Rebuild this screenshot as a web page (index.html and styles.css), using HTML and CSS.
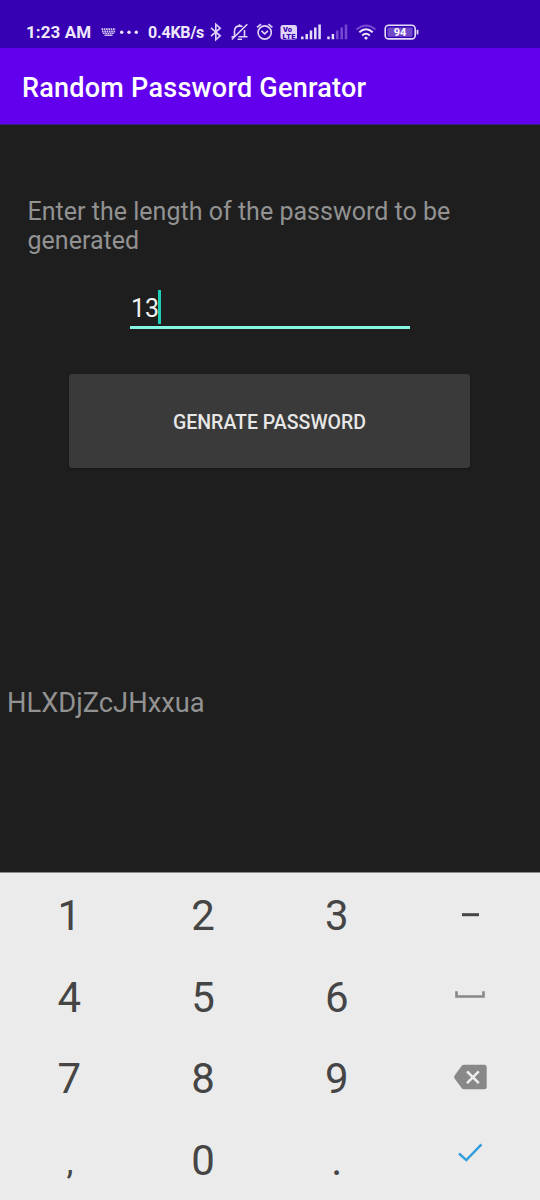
FILE: index.html
```html
<!DOCTYPE html>
<html lang="en">
<head>
<meta charset="utf-8">
<title>Random Password Genrator</title>
<link rel="stylesheet" href="styles.css">
</head>
<body>
<div class="screen">
  <header class="status">
    <span class="clock">1:23 AM</span>
    <svg class="notices" width="40" height="20" viewBox="100 22 40 20">
      <g fill="none" stroke="#d9cdf5" stroke-width="1.900" stroke-dasharray="1.600 .7">
        <path d="M101.500 29.100h14M102 31.500h13.500"/>
        <path d="M103 33.400h11.500" stroke-width="1.200"/>
      </g>
      <path d="M104.500 35.200h8" stroke="#d9cdf5" stroke-width="1.400"/>
      <g fill="#efe8fc"><circle cx="121.700" cy="32.200" r="1.700"/><circle cx="129" cy="32.200" r="1.700"/><circle cx="136.300" cy="32.200" r="1.700"/></g>
    </svg>
    <span class="speed">0.4KB/s</span>
    <svg class="icons" width="212" height="24" viewBox="208 20 212 24" fill="none" stroke="#e0d5f8" stroke-width="1.600">
      <path d="M211 27.800l9.200 8-4.400 4V24.200l4.400 4-9.200 8"/>
      <path d="M231.500 36.800h3v-5.500c0-3.400 2-5.200 5-5.400 1.300 0 2.300.3 3 .8M244.500 30v6.800h3M239.500 26v-1.800M237.500 39.300h4.500M231.800 39.500L247.300 24.300M238.500 36.800h7"/>
      <g>
        <circle cx="264.700" cy="32.500" r="6.600"/>
        <path d="M257 27.400l4-3.300M272.400 27.400l-4-3.300M261.500 30.800l3.200 3 3.200-3"/>
      </g>
      <rect x="280.500" y="25" width="16.500" height="14.600" rx="2.500" fill="#e0d5f8" stroke="none"/>
      <text class="volte" x="283" y="31.600">Vo</text>
      <text class="volte" x="282.500" y="38.500" textLength="13">LTE</text>
      <g stroke="#e6ddfa" stroke-width="2.500">
        <path d="M302.300 39.300V36.500M306.700 39.300V34M311 39.300V30.500M315.300 39.300V27.500M319.600 39.300V24.500"/>
        <path d="M328.500 39.300V36.500M332.900 39.300V34"/>
        <path d="M337.300 39.300V30.500M341.700 39.300V27.500M346 39.300V24.500" stroke="#7548d0"/>
      </g>
      <g stroke-width="2">
        <path d="M356.500 29.500Q366 21.500 375.500 29.500" stroke="#7548d0"/>
        <path d="M359.300 32.200Q366 26.300 372.700 32.200M362.200 35.400Q366 32 369.800 35.400" stroke="#eee7fc"/>
        <circle cx="366" cy="38" r="1.600" fill="#eee7fc" stroke="none"/>
      </g>
      <rect x="385.200" y="25.300" width="30" height="13.600" rx="3.500" stroke="#e6ddfa"/>
      <rect x="387.500" y="27.500" width="25" height="9.200" rx="1" fill="#7049cb" stroke="none"/>
      <path d="M417.500 29.800v4.600" stroke-width="1.800"/>
      <text class="battery" x="400" y="36.400" text-anchor="middle">94</text>
    </svg>
  </header>
  <div class="appbar"><h1 class="title">Random Password Genrator</h1></div>
  <main class="content">
    <p class="prompt">Enter the length of the password to be generated</p>
    <div class="field"><span class="value">13</span><span class="caret"></span></div>
    <button class="generate">GENRATE PASSWORD</button>
    <p class="result">HLXDjZcJHxxua</p>
  </main>
  <section class="keypad">
    <span class="key">1</span><span class="key">2</span><span class="key">3</span>
    <span class="key icon"><svg width="40" height="40" viewBox="450 895 40 40"><path d="M462 914.700h17" stroke="#454545" stroke-width="3"/></svg></span>
    <span class="key">4</span><span class="key">5</span><span class="key">6</span>
    <span class="key icon"><svg width="40" height="40" viewBox="450 977 40 40"><path d="M456.500 991.200v5.300h27v-5.300" fill="none" stroke="#888" stroke-width="2.600"/></svg></span>
    <span class="key">7</span><span class="key">8</span><span class="key">9</span>
    <span class="key icon"><svg width="40" height="40" viewBox="450 1059 40 40"><path d="M464 1064.700h20.200q2.500 0 2.500 2.500v19.600q0 2.500-2.500 2.500H464q-1.500 0-2.400-1.200l-7-9.700q-1-1.400 0-2.800l7-9.700q.9-1.200 2.400-1.200z" fill="#888"/><path d="M467 1071.400l11.800 11.800M478.800 1071.400l-11.800 11.800" stroke="#ededed" stroke-width="2.600"/></svg></span>
    <span class="key comma">,</span><span class="key">0</span><span class="key">.</span>
    <span class="key icon"><svg width="40" height="40" viewBox="450 1140 40 40"><path d="M459 1153.500l7.300 6.600 15.200-15.700" fill="none" stroke="#349fdc" stroke-width="2.500"/></svg></span>
  </section>
</div>
</body>
</html>
```
FILE: styles.css
```css
* { box-sizing: border-box; }
body { margin: 0; font-family: Roboto, sans-serif; }
h1, p { margin: 0; font-weight: 400; }
svg { display: block; flex: none; }
.screen { width: 540px; height: 1200px; display: flex; flex-direction: column; background: #1e1e1e; overflow: hidden; }
.status { height: 48px; display: flex; align-items: flex-start; background: #3700b3; color: #efe8fc; font-size: 17px; font-weight: 700; line-height: 20px; padding: 20px 0 0 26px; white-space: nowrap; }
.clock, .speed { padding-top: 2px; flex: none; }
.clock { width: 74px; letter-spacing: .1px; }
.notices { margin-top: 2px; }
.speed { width: 60px; margin-left: 8px; font-size: 16px; letter-spacing: -.2px; padding-top: 3px; }
.battery { font-size: 11px; font-weight: 700; fill: #fff; stroke: none; }
.volte { font-size: 7.500px; font-weight: 900; fill: #3a00b2; stroke: none; }
.appbar { height: 77px; background: #6200ee; border-bottom: 1px solid #35207a; padding: 0 22px; display: flex; align-items: center; }
.title { font-size: 27px; line-height: 32px; letter-spacing: .25px; font-weight: 500; color: #fff; white-space: nowrap; padding-top: 4px; }
.content { height: 747px; padding: 72px 0 0; }
.prompt { margin-left: 27.500px; width: 450px; font-size: 25px; line-height: 29px; letter-spacing: .02px; color: #929292; }
.field { margin: 35px 0 0 130px; width: 280px; height: 39px; border-bottom: 3px solid #86f5e4; display: flex; color: #f2f2f2; }
.value { font-size: 25px; line-height: 38px; padding-left: 1px; margin-right: -1px; }
.caret { width: 3px; height: 34px; background: #1ecdb8; }
.generate { display: block; margin: 45px 0 0 69px; width: 401px; height: 94px; border: 0; border-radius: 3px; background: #393a39; color: #e6e7e6; font: 500 19.500px/24px Roboto, sans-serif; padding: 4px 0 0; box-shadow: 0 1px 2px #171717; }
.result { margin: 219px 0 0 7px; font-size: 27.300px; line-height: 32px; color: #929292; }
.keypad { height: 328px; background: #ebebeb; border-top: 1px solid #8a8a8a; padding: 1px 3px 0 2px; display: grid; grid-template-columns: repeat(4, 1fr); grid-template-rows: repeat(4, 81.700px); }
.key { display: flex; align-items: center; justify-content: center; font-size: 42px; line-height: 49px; color: #454545; padding: 1px 0 0 1px; }
.icon { padding-left: 0; }
.comma { font-size: 35px; padding: 5px 0 0 2px; }
```
